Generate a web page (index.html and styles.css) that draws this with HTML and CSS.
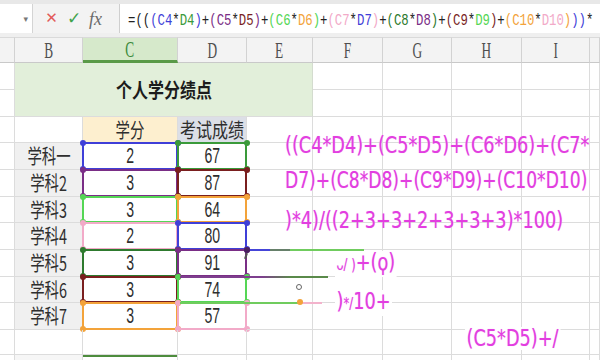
FILE: index.html
```html
<!DOCTYPE html>
<html lang="zh">
<head>
<meta charset="utf-8">
<title>个人学分绩点</title>
<link rel="stylesheet" href="styles.css">
</head>
<body>
<div class="app">
  <div class="strip"></div>
  <div class="fbar">
    <div class="namebox"><span class="dd">▾</span></div>
    <div class="tools"><span class="ic x">✕</span><span class="ic ok">✓</span><span class="ic fx">fx</span></div>
    <div class="input"><span class="ftext">=((<span class="tc k-blue">(C4</span>*<span class="tc k-green">D4</span><span class="tc k-blue">)</span>+<span class="tc k-purple">(C5</span>*<span class="tc k-red">D5</span><span class="tc k-purple">)</span>+<span class="tc k-lime">(C6</span>*<span class="tc k-orange">D6</span><span class="tc k-lime">)</span>+<span class="tc k-pink">(C7</span>*<span class="tc k-blue">D7</span><span class="tc k-pink">)</span>+<span class="tc k-dkgreen">(C8</span>*<span class="tc k-purple">D8</span><span class="tc k-dkgreen">)</span>+<span class="tc k-red">(C9</span>*<span class="tc k-lime">D9</span><span class="tc k-red">)</span>+<span class="tc k-orange">(C10</span>*<span class="tc k-pink">D10</span><span class="tc k-orange">)</span><span class="tc k-blue">))</span>*</span></div>
  </div>
  <div class="gap"></div>

  <div class="sheet">
    <!-- header -->
    <div class="cell h"></div>
    <div class="cell h"><span class="hl">B</span></div>
    <div class="cell h sel"><span class="hl">C</span></div>
    <div class="cell h"><span class="hl">D</span></div>
    <div class="cell h"><span class="hl">E</span></div>
    <div class="cell h"><span class="hl">F</span></div>
    <div class="cell h"><span class="hl">G</span></div>
    <div class="cell h"><span class="hl">H</span></div>
    <div class="cell h"><span class="hl">I</span></div>
    <div class="cell h"></div>

    <!-- rows 1-2 -->
    <div class="cell"></div>
    <div class="cell title"><span class="tt">个人学分绩点</span></div>
    <div class="cell"></div><div class="cell"></div><div class="cell"></div><div class="cell"></div><div class="cell"></div>
    <div class="cell"></div>
    <div class="cell"></div><div class="cell"></div><div class="cell"></div><div class="cell"></div><div class="cell"></div>

    <!-- row 3 -->
    <div class="cell"></div>
    <div class="cell"></div>
    <div class="cell yel"><span class="cj">学分</span></div>
    <div class="cell gry"><span class="cj wide">考试成绩</span></div>
    <div class="cell"></div><div class="cell"></div><div class="cell"></div><div class="cell"></div><div class="cell"></div><div class="cell"></div>

    <!-- row 4 -->
    <div class="cell"></div>
    <div class="cell lab"><span class="cj">学科一</span></div>
    <div class="cell"><span class="num">2</span><div class="rng c k-blue"></div></div>
    <div class="cell"><span class="num">67</span><div class="rng d k-green"></div></div>
    <div class="cell"></div><div class="cell"></div><div class="cell"></div><div class="cell"></div><div class="cell"></div><div class="cell"></div>

    <!-- row 5 -->
    <div class="cell"></div>
    <div class="cell lab"><span class="cj">学科2</span></div>
    <div class="cell"><span class="num">3</span><div class="rng c k-purple"></div></div>
    <div class="cell"><span class="num">87</span><div class="rng d k-red"></div></div>
    <div class="cell"></div><div class="cell"></div><div class="cell"></div><div class="cell"></div><div class="cell"></div><div class="cell"></div>

    <!-- row 6 -->
    <div class="cell"></div>
    <div class="cell lab"><span class="cj">学科3</span></div>
    <div class="cell"><span class="num">3</span><div class="rng c k-lime"></div></div>
    <div class="cell"><span class="num">64</span><div class="rng d k-orange"></div></div>
    <div class="cell"></div><div class="cell"></div><div class="cell"></div><div class="cell"></div><div class="cell"></div><div class="cell"></div>

    <!-- row 7 -->
    <div class="cell"></div>
    <div class="cell lab"><span class="cj">学科4</span></div>
    <div class="cell"><span class="num">2</span><div class="rng c k-pink"></div></div>
    <div class="cell"><span class="num">80</span><div class="rng d k-blue"></div></div>
    <div class="cell"></div><div class="cell"></div><div class="cell"></div><div class="cell"></div><div class="cell"></div><div class="cell"></div>

    <!-- row 8 -->
    <div class="cell"></div>
    <div class="cell lab"><span class="cj">学科5</span></div>
    <div class="cell"><span class="num">3</span><div class="rng c k-dkgreen"></div></div>
    <div class="cell"><span class="num">91</span><div class="rng d k-purple"></div></div>
    <div class="cell"></div><div class="cell"></div><div class="cell"></div><div class="cell"></div><div class="cell"></div><div class="cell"></div>

    <!-- row 9 -->
    <div class="cell"></div>
    <div class="cell lab"><span class="cj">学科6</span></div>
    <div class="cell"><span class="num">3</span><div class="rng c k-red"></div></div>
    <div class="cell"><span class="num">74</span><div class="rng d k-lime"></div></div>
    <div class="cell"></div><div class="cell"></div><div class="cell"></div><div class="cell"></div><div class="cell"></div><div class="cell"></div>

    <!-- row 10 -->
    <div class="cell"></div>
    <div class="cell lab"><span class="cj">学科7</span></div>
    <div class="cell"><span class="num">3</span><div class="rng c k-orange"></div></div>
    <div class="cell"><span class="num">57</span><div class="rng d k-pink"></div></div>
    <div class="cell"></div><div class="cell"></div><div class="cell"></div><div class="cell"></div><div class="cell"></div><div class="cell"></div>

    <!-- row 11 -->
    <div class="cell"></div><div class="cell"></div><div class="cell"></div><div class="cell"></div><div class="cell"></div>
    <div class="cell"></div><div class="cell"></div><div class="cell"></div><div class="cell"></div><div class="cell"></div>

    <!-- row 12 -->
    <div class="cell"></div><div class="cell lab2"></div><div class="cell seltop"></div><div class="cell"></div><div class="cell"></div>
    <div class="cell"></div><div class="cell"></div><div class="cell"></div><div class="cell"></div><div class="cell"></div>
  </div>

  <!-- hand-drawn annotation layer -->
  <div class="ink">
    <div class="seg s1"></div><div class="seg s2"></div><div class="seg s3"></div>
    <div class="seg s4"></div>
    <div class="seg s6"></div><div class="seg s7"></div>
    <div class="pin p1"></div><div class="tick"></div>
    <div class="pin p2"></div><div class="handle"></div>

    <div class="ann l1">((C4*D4)+(C5*D5)+(C6*D6)+(C7*</div>
    <div class="ann l2">D7)+(C8*D8)+(C9*D9)+(C10*D10)</div>
    <div class="ann l3">)*4)/((2+3+3+2+3+3+3)*100)</div>
    <div class="ann f1"><span class="sm">ᴗ/ )</span>+(ϙ)</div>
    <div class="ann f2">)<span class="sm">*/</span>10+</div>
    <div class="ann f3">(C5*D5)+/</div>
  </div>
</div>
</body>
</html>
```

FILE: styles.css
```css
* { box-sizing: border-box; }

body {
  margin: 0;
  background: #fff;
  font-family: "Noto Sans CJK SC", "Liberation Sans", sans-serif;
  color: #333;
}

.app {
  position: relative;
  width: 600px;
  height: 360px;
  overflow: hidden;
  background: #fff;
}

/* ---------- formula bar ---------- */
.strip { height: 4px; background: #e8e8e8; }

.fbar {
  display: flex;
  height: 29px;
  background: #f3f3f3;
}

.namebox {
  width: 33px;
  background: #fff;
  border-right: 1px solid #d4d4d4;
  display: flex;
  align-items: center;
  justify-content: flex-end;
  padding-right: 4px;
}
.dd { font-size: 9px; color: #777; font-family: "DejaVu Sans", sans-serif; }

.tools {
  width: 86px;
  display: flex;
  align-items: center;
  gap: 9px;
  padding-left: 12px;
}
.ic {
  width: 13px;
  text-align: center;
  line-height: 1;
  font-family: "DejaVu Sans", sans-serif;
}
.x { color: #e25a5a; font-size: 15px; }
.ok { color: #3fa34d; font-size: 17px; font-weight: bold; }
.fx {
  color: #6a6a6a;
  font-family: "Liberation Serif", serif;
  font-style: italic;
  font-size: 18px;
}

.input {
  flex: 1;
  min-width: 0;
  background: #fff;
  border-left: 1px solid #cfcfcf;
  padding-left: 8px;
  padding-top: 3px;
  display: flex;
  align-items: center;
  overflow: hidden;
}
.ftext {
  display: inline-block;
  flex: none;
  white-space: nowrap;
  font-family: "Liberation Mono", monospace;
  font-size: 17px;
  line-height: 1;
  color: #222;
  transform: scaleX(.724);
  transform-origin: 0 50%;
}
.tc { color: var(--c); }

.gap { height: 4px; background: #efefef; }

/* ---------- colours of reference ranges ---------- */
.k-blue    { --c: #3f3fd8; }
.k-green   { --c: #3a9a3a; }
.k-purple  { --c: #7a2e86; }
.k-red     { --c: #7a1f1f; }
.k-lime    { --c: #55d655; }
.k-orange  { --c: #f3a33a; }
.k-pink    { --c: #f2aac8; }
.k-dkgreen { --c: #2e7a2e; }

/* ---------- sheet ---------- */
.sheet {
  display: grid;
  grid-template-columns: 15px 68px 95px 69px 66px 70px 69px 70px 68px 1fr;
  grid-template-rows: 26px 27px 27px 26px 27px 27px 26px 27px 27px 26px 27px 25px 27px;
}

.cell {
  position: relative;
  display: flex;
  align-items: center;
  justify-content: center;
  white-space: nowrap;
  border-right: 1px solid #dcdcdc;
  border-bottom: 1px solid #dcdcdc;
}

.h {
  background: #f3f3f3;
  border-right-color: #d2d2d2;
  border-bottom-color: #c9c9c9;
  border-top: 1px solid #dadada;
}
.hl {
  display: inline-block;
  font-family: "Liberation Serif", serif;
  font-size: 23px;
  line-height: 1;
  color: #4f4f4f;
  transform: scaleX(.58);
}
.h.sel {
  background: #d6e9cb;
  border-bottom: 3px solid #5a9a48;
}
.h.sel .hl { color: #3a8a3a; }

.title {
  grid-column: span 4;
  grid-row: span 2;
  background: #e2efda;
  border-right-color: #d4dccf;
}
.tt {
  display: inline-block;
  font-size: 20px;
  font-weight: bold;
  line-height: 1;
  color: #1c1c1c;
  transform: scaleX(.8);
}

.yel { background: #fdefcf; }
.gry { background: #dcdfe7; }

.cj {
  display: inline-block;
  white-space: nowrap;
  font-size: 20px;
  line-height: 1;
  color: #2e2e2e;
  transform: scaleX(.72);
}
.cj.wide { transform: scaleX(.8); }

.lab { background: #f0f0f0; }
.lab2 { background: #f6f6f6; }

.num {
  display: inline-block;
  font-family: "Liberation Sans", sans-serif;
  font-size: 22px;
  line-height: 1;
  color: #2e2e2e;
  transform: scaleX(.64);
}

.seltop { box-shadow: inset 0 2px 0 #4d8c3d; }

/* range highlight drawn over the referenced cells */
.rng {
  position: absolute;
  top: -1px;
  left: -1px;
  right: -1px;
  bottom: -1px;
  border: 2px solid var(--c);
}
.rng::before,
.rng::after {
  content: "";
  position: absolute;
  left: -4px;
  width: 6px;
  height: 6px;
  border-radius: 50%;
  background: var(--c);
}
.rng::before { top: -4px; }
.rng::after { bottom: -4px; }
.rng.c::before, .rng.c::after { box-shadow: 95px 0 0 var(--c); }
.rng.d::before, .rng.d::after { box-shadow: 69px 0 0 var(--c); }

/* ---------- annotation layer ---------- */
.ink {
  position: absolute;
  inset: 0;
  pointer-events: none;
}
.seg { position: absolute; height: 2px; }
.s1 { top: 249px; left: 247px; width: 23px; background: #4545d8; }
.s2 { top: 249px; left: 270px; width: 20px; background: #66806a; }
.s3 { top: 249px; left: 290px; width: 74px; background: #70cc5e; }
.s4 { top: 276px; left: 180px; width: 148px; background: linear-gradient(90deg, #7e3f8e 0, #7e3f8e 55%, #5a8a4a 75%, #5a8a4a 100%); }
.s6 { top: 302px; left: 180px; width: 118px; background: #70cc5e; }
.s7 { top: 302px; left: 302px; width: 20px; background: #f3b3cc; }

.pin {
  position: absolute;
  width: 6px;
  height: 6px;
  border-radius: 50%;
}
.p1 { top: 247px; left: 244px; background: #4a2060; }
.p2 { top: 299px; left: 297px; background: #f3a33a; }
.tick {
  position: absolute;
  top: 253px;
  left: 245px;
  width: 2px;
  height: 6px;
  background: #555;
  transform: rotate(20deg);
}
.handle {
  position: absolute;
  top: 284px;
  left: 296px;
  width: 6px;
  height: 6px;
  border: 1px solid #666;
  border-radius: 50%;
}

.ann {
  position: absolute;
  font-family: "DejaVu Sans", sans-serif;
  font-size: 23px;
  line-height: 23px;
  color: #e23ee0;
  white-space: nowrap;
  transform: scaleX(.77);
  transform-origin: 0 0;
  text-shadow: 0 0 1px #f2a6f0;
}
.l1 { top: 134px; left: 285px; }
.l2 { top: 169px; left: 285px; transform: scaleX(.745); }
.l3 { top: 209px; left: 285px; }
.f1 { top: 251px; left: 335px; background: #fff; padding: 0 2px; }
.f2 { top: 290px; left: 335px; background: #fff; padding: 0 2px; }
.f3 { top: 327px; left: 465px; background: #fff; padding: 0 2px; }
.sm { font-size: 15px; }
```
